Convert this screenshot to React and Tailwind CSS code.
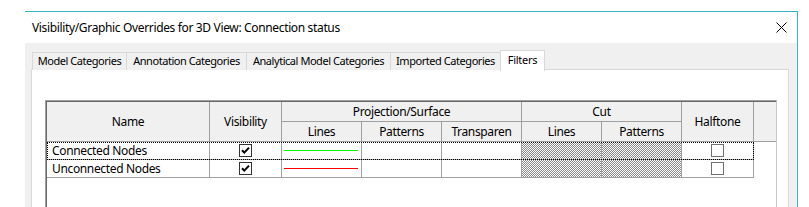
import React from "react";

const font = "font-['Noto_Sans',sans-serif] tracking-[-0.35px]";

function Check({ checked }) {
  return (
    <div
      className={`w-[13px] h-[13px] border bg-white flex items-center justify-center ${
        checked ? "border-[#333333]" : "border-[#707070]"
      }`}
    >
      {checked && (
        <svg width="11" height="11" viewBox="0 0 11 11">
          <path d="M2 5.2 L4.3 7.6 L9 2.6" fill="none" stroke="#000" strokeWidth="2" />
        </svg>
      )}
    </div>
  );
}

const dither =
  "bg-[repeating-conic-gradient(#8a8a8a_0_25%,#ffffff_0_50%)] bg-[length:2px_2px]";

function DataRow({ name, lineClass, focus }) {
  const cell = "h-[18px] border-r border-b border-[#a0a0a0] shrink-0";
  return (
    <div className="flex relative">
      <div className={`${cell} w-[163px] pl-[5px] flex items-center text-[12px] text-black leading-none whitespace-nowrap`}>
        {name}
      </div>
      <div className={`${cell} w-[72px] flex items-center justify-center`}>
        <Check checked />
      </div>
      <div className={`${cell} w-[80px] flex items-center pl-[2px] pr-[3px]`}>
        <div className={`h-[1px] w-full ${lineClass}`} />
      </div>
      <div className={`${cell} w-[80px]`} />
      <div className={`${cell} w-[80px]`} />
      <div className={`${cell} w-[80px] ${dither}`} />
      <div className={`${cell} w-[80px] ${dither}`} />
      <div className={`${cell} w-[72px] flex items-center justify-center`}>
        <Check />
      </div>
      {focus && (
        <div className="absolute left-0 top-0 w-[707px] h-[18px] border border-dotted border-black pointer-events-none" />
      )}
    </div>
  );
}

export default function App() {
  const hcell =
    "bg-[#f0f0f0] border-r border-b border-[#a0a0a0] flex items-center justify-center text-[12px] text-black whitespace-nowrap";
  const tab =
    "mt-[2px] h-[18px] border border-r-0 border-b-0 border-[#d9d9d9] bg-[#f0f0f0] flex items-center justify-center text-[11px] tracking-[-0.45px] text-black whitespace-nowrap";
  return (
    <div className={`w-[809px] h-[207px] bg-white overflow-hidden ${font}`}>
      <div className="ml-[25px] mt-[11px] w-[773px] h-[220px] border-t border-r border-[#3ab4c6] flex flex-col">
        <div className="h-[31px] bg-white flex items-center justify-between pl-[7px] pr-[10px]">
          <span className="text-[12px] text-black whitespace-nowrap">
            Visibility/Graphic Overrides for 3D View: Connection status
          </span>
          <svg width="11" height="11" viewBox="0 0 11 11">
            <path d="M0.5 0.5 L10.5 10.5 M10.5 0.5 L0.5 10.5" stroke="#000" strokeWidth="1" />
          </svg>
        </div>
        <div className="flex-1 bg-[#f0f0f0] pl-[6px] pt-[7px]">
          <div className="flex items-start pl-[1px] h-[21px] relative z-10">
            <div className={`${tab} w-[94px]`}>Model Categories</div>
            <div className={`${tab} w-[120px]`}>Annotation Categories</div>
            <div className={`${tab} w-[144px]`}>Analytical Model Categories</div>
            <div className={`${tab} w-[110px]`}>Imported Categories</div>
            <div className="h-[21px] w-[45px] border border-b-0 border-[#d9d9d9] bg-white flex items-center justify-center text-[11px] tracking-[-0.3px] text-black pb-[2px] whitespace-nowrap">
              Filters
            </div>
          </div>
          <div className="-mt-[2px] w-[758px] h-[160px] border border-[#d9d9d9] bg-white pl-[13px] pt-[30px]">
            <div className="w-[732px] h-[120px] border-l border-t border-r border-[#a0a0a0] border-r-[#c8c8c8]">
              <div className="h-full border-l border-t border-[#696969]">
                <div className="grid grid-cols-[163px_72px_80px_80px_80px_80px_80px_72px_22px] grid-rows-[20px_20px]">
                  <div className={`${hcell} row-span-2`}>Name</div>
                  <div className={`${hcell} row-span-2`}>Visibility</div>
                  <div className={`${hcell} col-span-3`}>Projection/Surface</div>
                  <div className={`${hcell} col-span-2`}>Cut</div>
                  <div className={`${hcell} row-span-2`}>Halftone</div>
                  <div className="row-span-2 bg-[#f0f0f0] border-b border-[#a0a0a0]" />
                  <div className={hcell}>Lines</div>
                  <div className={hcell}>Patterns</div>
                  <div className={hcell}>Transparen</div>
                  <div className={hcell}>Lines</div>
                  <div className={hcell}>Patterns</div>
                </div>
                <DataRow name="Connected Nodes" lineClass="bg-[#00ff00]" focus />
                <DataRow name="Unconnected Nodes" lineClass="bg-[#ff0000]" />
              </div>
            </div>
          </div>
        </div>
      </div>
    </div>
  );
}
